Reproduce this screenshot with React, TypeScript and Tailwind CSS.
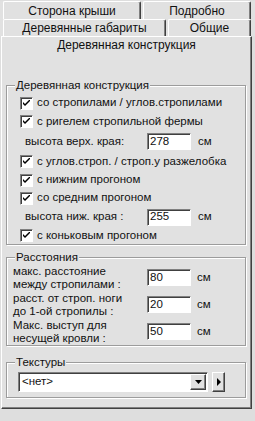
import type { ReactNode } from 'react';

const raised =
  'border-t border-l border-t-white border-l-white border-r border-b border-r-[#404040] border-b-[#404040] shadow-[inset_-1px_-1px_0_#808080]';
const sunken =
  'border-t border-l border-t-[#808080] border-l-[#808080] border-r border-b border-r-white border-b-white shadow-[inset_1px_1px_0_#404040]';

function Tab({ label, width }: { label: string; width: number }) {
  return (
    <div
      className="flex h-full items-center justify-center rounded-t-[2px] border-t border-l border-white border-r border-r-[#404040] shadow-[inset_-1px_0_0_#808080]"
      style={{ width }}
    >
      {label}
    </div>
  );
}

function Group({ title, className, children }: { title: string; className?: string; children: ReactNode }) {
  return (
    <div
      className={`relative ml-[4px] w-[240px] border border-[#9c9c9c] shadow-[1px_1px_0_#fff,inset_1px_1px_0_#fff] ${className ?? ''}`}
    >
      <span className="absolute -top-[8px] left-[8px] bg-[#e1e1e1] px-[1px] leading-[14px]">{title}</span>
      {children}
    </div>
  );
}

function Check({ label, h }: { label: string; h: number }) {
  return (
    <div className="flex items-center pl-[13px]" style={{ height: h }}>
      <span className={`flex h-[13px] w-[13px] items-center justify-center bg-white ${sunken}`}>
        <svg width="7" height="7" viewBox="0 0 7 7">
          <path d="M0 2 L0 4 L2 6 L7 1 L7 -1 L2 4 Z" fill="#000" />
        </svg>
      </span>
      <span className="ml-[4px]">{label}</span>
    </div>
  );
}

function NumField({ value }: { value: string }) {
  return (
    <span className={`flex h-[17px] w-[44px] items-center bg-white pl-[2px] leading-none ${sunken}`}>{value}</span>
  );
}

function InputRow({ label, value, h }: { label: string; value: string; h: number }) {
  return (
    <div className="flex items-center pl-[18px]" style={{ height: h }}>
      <span className="w-[122px]">{label}</span>
      <NumField value={value} />
      <span className="ml-[7px]">см</span>
    </div>
  );
}

function DistRow({ lines, value }: { lines: [string, string]; value: string }) {
  return (
    <div className="flex h-[27px] items-center pl-[6px]">
      <div className="w-[134px] leading-[13px]">
        <div>{lines[0]}</div>
        <div>{lines[1]}</div>
      </div>
      <NumField value={value} />
      <span className="ml-[6px]">см</span>
    </div>
  );
}

export default function App() {
  return (
    <div className="h-[421px] w-[255px] overflow-hidden bg-[#dedede] font-['Liberation_Sans',Arial,sans-serif] text-[11.5px] text-[#111]">
      <div className="pt-[1px]">
        <div className="flex h-[18px] gap-[2px] pl-[3px] bg-[#e1e1e1] text-[12px]">
          <Tab label="Сторона крыши" width={138} />
          <Tab label="Подробно" width={108} />
        </div>
        <div className="flex h-[17px] gap-[2px] pl-[3px] bg-[#e1e1e1] text-[12px]">
          <Tab label="Деревянные габариты" width={163} />
          <Tab label="Общие" width={83} />
        </div>
      </div>

      <div className={`ml-[1px] h-[373px] w-[251px] bg-[#e1e1e1] ${raised}`}>
        <div className="h-[17px] text-center text-[12px] leading-[17px]">Деревянная конструкция</div>

        <Group title="Деревянная конструкция" className="mt-[31px]">
          <div className="pt-[8px]">
            <Check label="со стропилами / углов.стропилами" h={18} />
            <Check label="с ригелем стропильной фермы" h={19} />
            <InputRow label="высота верх. края:" value="278" h={21} />
            <Check label="с углов.строп. / строп.у разжелобка" h={19} />
            <Check label="с нижним прогоном" h={18} />
            <Check label="со средним прогоном" h={18} />
            <InputRow label="высота ниж. края :" value="255" h={20} />
            <Check label="с коньковым прогоном" h={17} />
          </div>
        </Group>

        <Group title="Расстояния" className="mt-[12px]">
          <div className="pt-[6px]">
            <DistRow lines={['макс. расстояние', 'между стропилами :']} value="80" />
            <DistRow lines={['расст. от строп. ноги', 'до 1-ой стропилы :']} value="20" />
            <DistRow lines={['Макс. выступ для', 'несущей кровли :']} value="50" />
          </div>
        </Group>

        <Group title="Текстуры" className="mt-[16px]">
          <div className="flex pt-[9px] pb-[5px] pl-[11px]">
            <div className={`flex h-[20px] w-[190px] items-center justify-between bg-white pl-[3px] ${sunken}`}>
              <span>&lt;нет&gt;</span>
              <span className={`mr-[1px] flex h-[16px] w-[16px] items-center justify-center bg-[#e1e1e1] ${raised}`}>
                <svg width="7" height="4" viewBox="0 0 7 4">
                  <path d="M0 0 H7 L3.5 4 Z" fill="#000" />
                </svg>
              </span>
            </div>
            <span className={`ml-[4px] flex h-[20px] w-[13px] items-center justify-center bg-[#e1e1e1] ${raised}`}>
              <svg width="4" height="8" viewBox="0 0 4 8">
                <path d="M0 0 L4 4 L0 8 Z" fill="#000" />
              </svg>
            </span>
          </div>
        </Group>
      </div>
    </div>
  );
}
